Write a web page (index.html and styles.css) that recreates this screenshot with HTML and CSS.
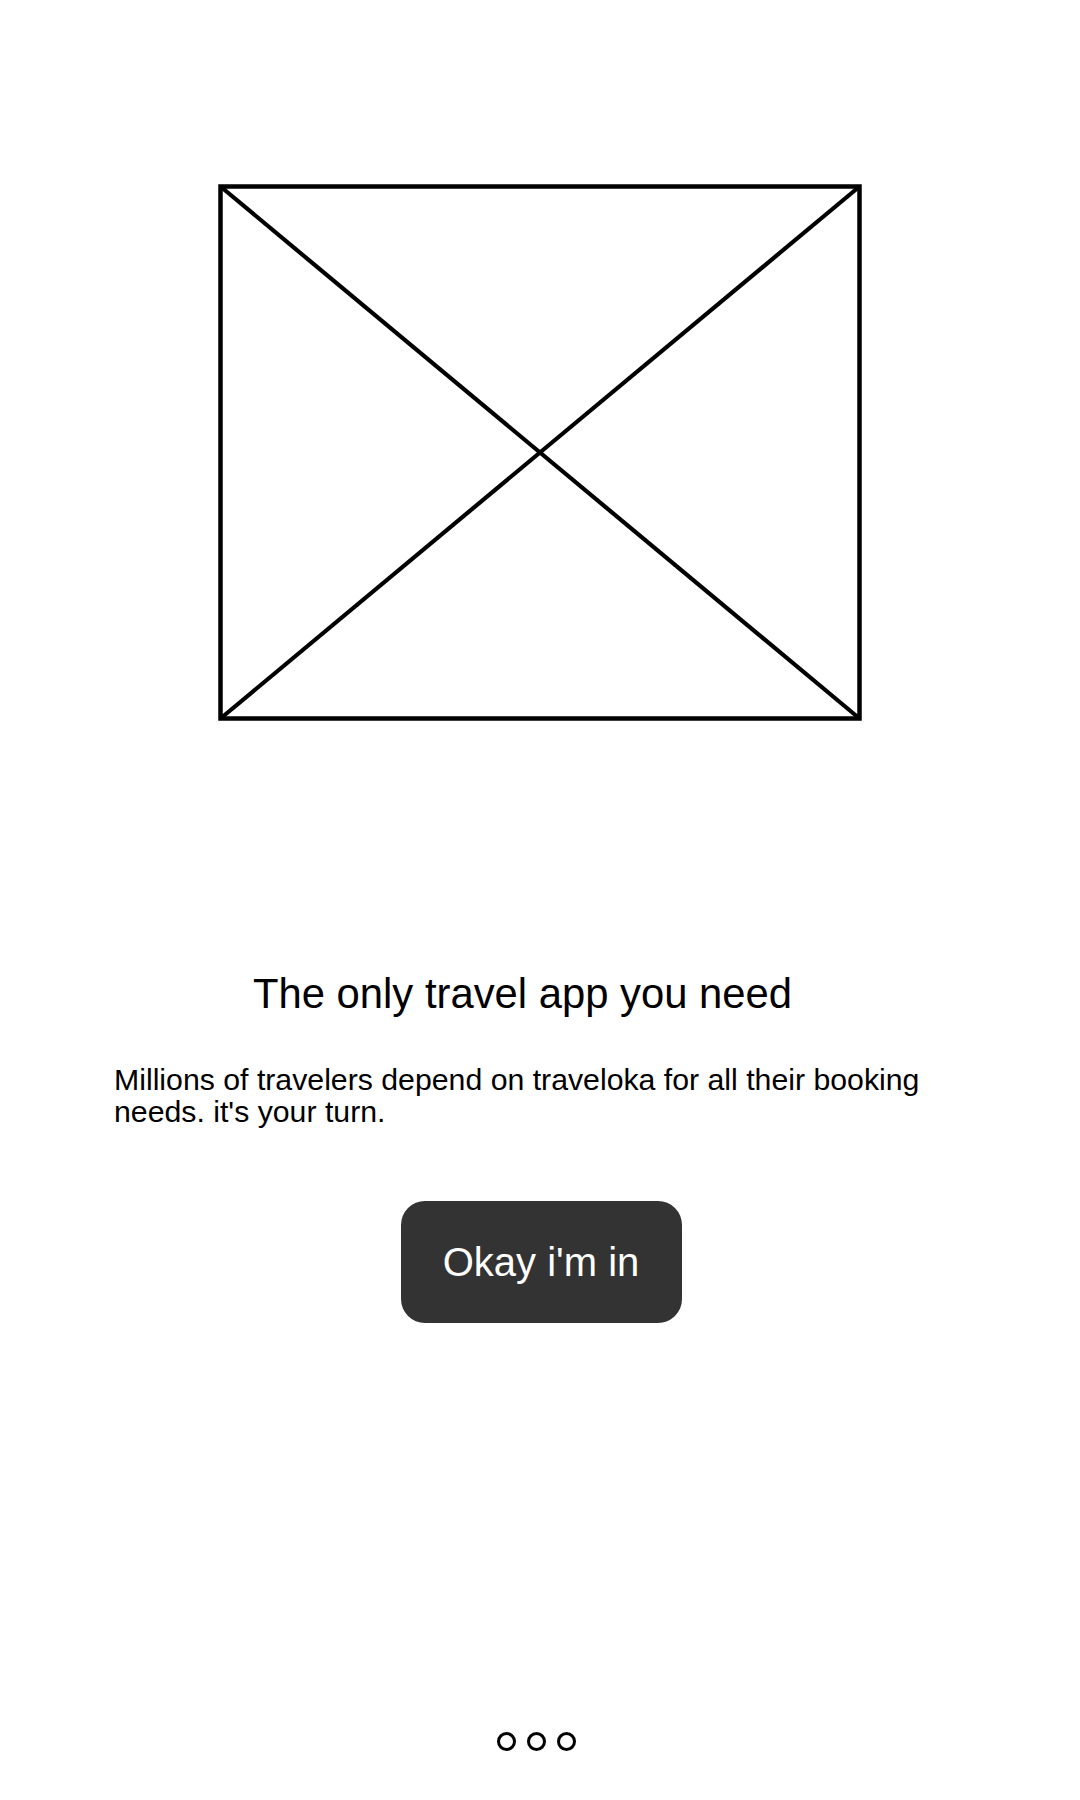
FILE: index.html
```html
<!DOCTYPE html>
<html>
<head>
<meta charset="utf-8">
<link rel="stylesheet" href="styles.css">
</head>
<body>
<main class="screen">
  <div class="placeholder">
    <svg width="644" height="537" viewBox="0 0 644 537">
      <rect x="2.5" y="2.5" width="639" height="532" fill="none" stroke="#000" stroke-width="4.5"/>
      <line x1="2.5" y1="2.5" x2="641.5" y2="534.5" stroke="#000" stroke-width="4.2"/>
      <line x1="641.5" y1="2.5" x2="2.5" y2="534.5" stroke="#000" stroke-width="4.2"/>
    </svg>
  </div>
  <h1 class="title">The only travel app you need</h1>
  <p class="desc">Millions of travelers depend on traveloka for all their booking needs. it's your turn.</p>
  <div class="actions">
    <button class="cta">Okay i'm in</button>
  </div>
  <div class="dots">
    <span class="dot"></span>
    <span class="dot"></span>
    <span class="dot"></span>
  </div>
</main>
</body>
</html>
```
FILE: styles.css
```css
html, body {
  margin: 0;
  padding: 0;
  background: #fff;
}
body {
  font-family: "Liberation Sans", Arial, sans-serif;
  color: #000;
}
.screen {
  width: 1080px;
  height: 1800px;
  display: flex;
  flex-direction: column;
}
.placeholder {
  margin-top: 184px;
  display: flex;
  justify-content: center;
}
.placeholder svg {
  display: block;
}
.title {
  margin: 249px 0 0 0;
  padding-right: 35px;
  font-size: 41.8px;
  font-weight: normal;
  text-align: center;
  line-height: 48px;
}
.desc {
  margin: 46px 0 0 0;
  padding: 0 114px;
  font-size: 30.25px;
  line-height: 32px;
}
.actions {
  margin-top: 73px;
  display: flex;
  justify-content: center;
  padding-left: 2px;
}
.cta {
  width: 281px;
  height: 122px;
  border: none;
  border-radius: 24px;
  background: #333333;
  color: #fff;
  font-family: "Liberation Sans", Arial, sans-serif;
  font-size: 40px;
  padding: 0;
}
.dots {
  margin-top: 409px;
  display: flex;
  justify-content: center;
  gap: 11px;
  padding-right: 8px;
}
.dot {
  width: 13px;
  height: 13px;
  border: 3px solid #000;
  border-radius: 50%;
  display: block;
}
```
